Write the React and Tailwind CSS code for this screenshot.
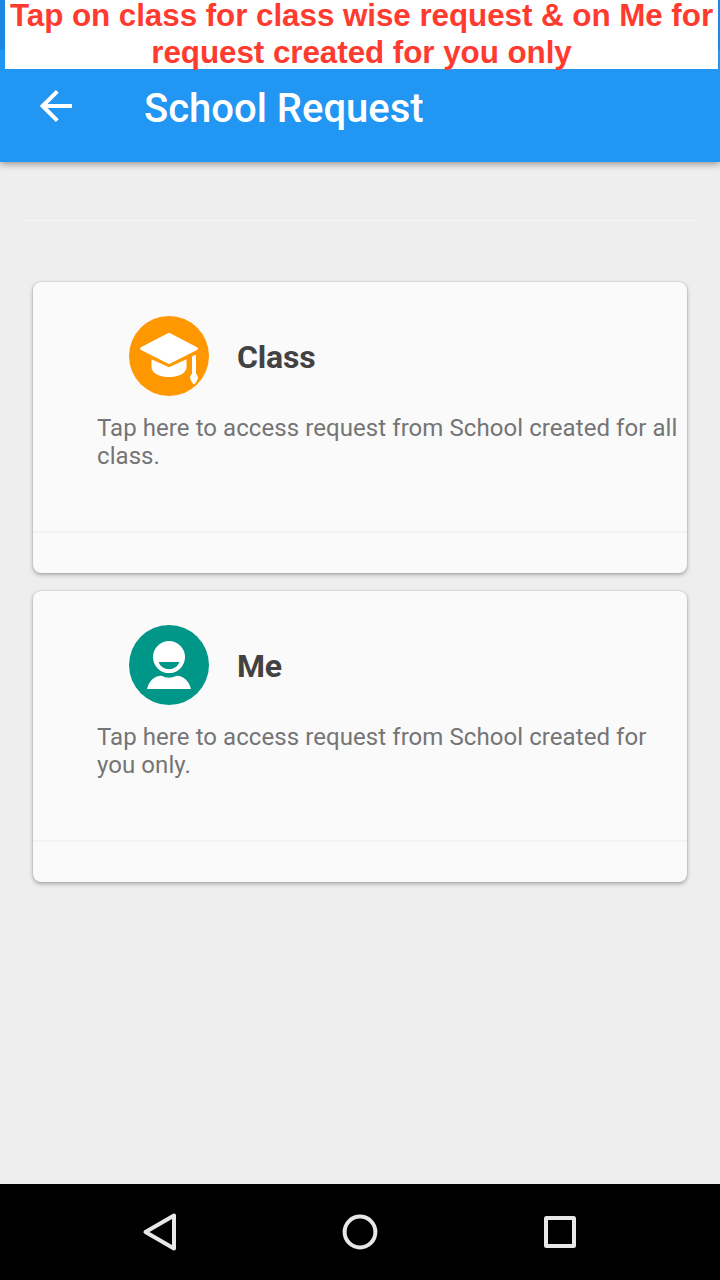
function ClassIcon() {
  return (
    <svg viewBox="0 0 80 80" className="size-20 shrink-0" aria-hidden="true">
      <circle cx="40" cy="40" r="40" fill="#ff9800" />
      <g fill="#fff">
        <path d="M38.8 17.2 Q40 16.5 41.2 17.2 L68 31.2 Q70 32.6 68 34 L41.2 47.6 Q40 48.2 38.8 47.6 L12 34 Q10 32.6 12 31.2 Z" />
        <path d="M22.5 43.3 L40 51.3 L57.5 43.3 V52 C56 58.5 48 61 40 61 C32 61 24 58.5 22.5 52 Z" />
        <path d="M63 41 Q63.3 39.6 67 39 V57.5 Q69 60 69 62 Q68 66 65 68.5 Q62 66 61 62 Q61 60 63 57.5 Z" />
      </g>
    </svg>
  );
}

function MeIcon() {
  return (
    <svg viewBox="0 0 80 80" className="size-20 shrink-0" aria-hidden="true">
      <circle cx="40" cy="40" r="40" fill="#009688" />
      <circle cx="40" cy="32.1" r="16" fill="#fff" />
      <path d="M29.8 37 H50.2 C48 46.5 32 46.5 29.8 37 Z" fill="#009688" />
      <path d="M18 63.9 C20 56 25 51 32.5 50.7 Q40 54.8 47.5 50.7 C55 51 60 56 62 63.9 Z" fill="#fff" />
    </svg>
  );
}

function RequestCard({ icon, title, description }) {
  return (
    <section className="flex h-[291px] flex-col rounded-lg bg-[#fafafa] pt-[34px] shadow-[0_2px_4px_rgba(0,0,0,0.28),0_0_2px_rgba(0,0,0,0.2)]">
      <div className="flex items-center gap-7 pl-24">
        {icon}
        <h2 className="pt-0.5 text-[32px] leading-10 font-bold tracking-[-0.2px] text-[#424242]">{title}</h2>
      </div>
      <p className="mt-[18px] mr-1.5 ml-16 h-[117px] text-[24px] leading-7 tracking-[0.07px] text-[#757575]">{description}</p>
      <div className="h-0.5 bg-[#f3f3f3]" />
    </section>
  );
}

export default function App() {
  return (
    <div className="flex h-[1280px] w-[720px] flex-col overflow-hidden bg-[#eeeeee] font-['Roboto',sans-serif]">
      <header className="relative z-10 h-[162px] shrink-0 bg-[#2196f3] shadow-[0_2px_7px_rgba(0,0,0,0.38)]">
        <div className="flex h-[69px] bg-[linear-gradient(#1e88e5_50px,#2196f3_50px)] pr-0.5 pl-[5px]">
          <p className="flex-1 bg-white text-center font-['Liberation_Sans',sans-serif] text-[31.4px] font-bold tracking-[-0.06px] whitespace-nowrap text-[#ff3b30]">
            <span className="block pb-[3px] leading-[31px]">Tap on class for class wise request &amp; on Me for</span>
            <span className="block leading-[37px]">request created for you only</span>
          </p>
        </div>
        <div className="flex h-[78px] items-center pl-10">
          <svg viewBox="0 0 32 32" className="mb-1 size-8" fill="none" stroke="#fff" strokeWidth="4" aria-label="Back">
            <path d="M32 16 H3 M17.3 1.4 L2.7 16 L17.3 30.6" />
          </svg>
          <h1 className="mt-0.5 ml-[72px] text-[40px] leading-[48px] font-medium text-white">School Request</h1>
        </div>
      </header>
      <main className="flex flex-1 flex-col">
        <div className="mx-6 mt-[58px] h-px bg-[#f5f5f5]" />
        <div className="mx-[33px] mt-[61px] flex flex-col gap-[18px]">
          <RequestCard icon={<ClassIcon />} title="Class" description="Tap here to access request from School created for all class." />
          <RequestCard icon={<MeIcon />} title="Me" description="Tap here to access request from School created for you only." />
        </div>
      </main>
      <nav className="grid h-24 shrink-0 grid-cols-[200px_200px_200px] items-center justify-center bg-black">
        <svg viewBox="0 0 40 40" className="size-10 justify-self-center" fill="none" stroke="#e8e8e8" strokeWidth="4" strokeLinejoin="round" aria-label="Back">
          <path d="M34 3.5 V36.5 L5.5 20 Z" />
        </svg>
        <svg viewBox="0 0 40 40" className="size-10 justify-self-center" fill="none" stroke="#e8e8e8" strokeWidth="4" aria-label="Home">
          <circle cx="20" cy="20" r="15.4" />
        </svg>
        <svg viewBox="0 0 40 40" className="size-10 justify-self-center" fill="none" stroke="#e8e8e8" strokeWidth="4" strokeLinejoin="round" aria-label="Recents">
          <rect x="6" y="6" width="28" height="28" rx="0.5" />
        </svg>
      </nav>
    </div>
  );
}
